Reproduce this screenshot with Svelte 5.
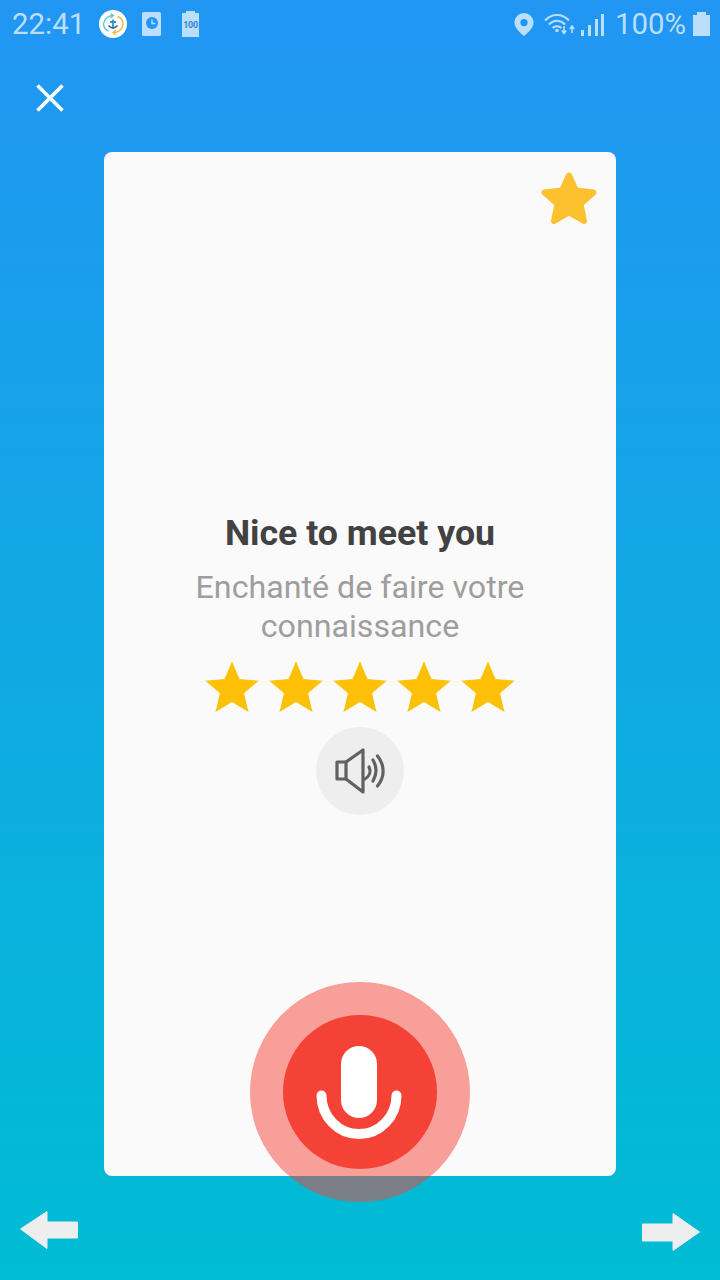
<script>
  const stars = [1, 2, 3, 4, 5];
</script>

<div class="screen">
  <header class="status">
    <span class="time">22:41</span>
    <svg class="app-badge" viewBox="0 0 28 28" aria-hidden="true">
      <circle cx="14" cy="14" r="14" fill="#fff" />
      <path d="M14 5.500A9.500 9.500 0 0 0 4.500 14a8 8 0 0 0 5 7" fill="none" stroke="#5ec2dc" stroke-width="1.400" />
      <path d="M11.500 3.500L14.500 5.500L11.500 8" fill="none" stroke="#5ec2dc" stroke-width="1.200" />
      <path d="M15 22.500A9 9 0 0 0 24 14a8 8 0 0 0-5.500-7.500" fill="none" stroke="#f6b73c" stroke-width="1.400" />
      <path d="M17 19.800L14 22.400L17 25" fill="none" stroke="#f6b73c" stroke-width="1.200" />
      <path d="M14 9.500v8M11 12h6" fill="none" stroke="#3f8fc4" stroke-width="1.800" />
      <path d="M9.500 15.500q4.500 5 9 0" fill="none" stroke="#2f6f9f" stroke-width="1.800" />
    </svg>
    <svg class="clock" viewBox="0 0 19 24" aria-hidden="true">
      <rect width="19" height="24" rx="1.500" fill="#bbdefb" />
      <circle cx="10" cy="11" r="6" fill="#2196f3" />
      <path d="M10 7.500V11.500H13.500" fill="none" stroke="#bbdefb" stroke-width="1.400" />
    </svg>
    <span class="batt-note"><span class="batt-cap"></span><span class="batt-label">100</span></span>
    <span class="spacer"></span>
    <svg class="pin" viewBox="0 0 20 23" aria-hidden="true">
      <path fill-rule="evenodd" fill="#bbdefb" d="M10 0a9.500 9.500 0 0 1 9.500 9.500C19.500 15 14 19.500 10 23 6 19.500.5 15 .5 9.500A9.500 9.500 0 0 1 10 0zm0 6a3.600 3.600 0 1 0 0 7.200A3.600 3.600 0 0 0 10 6z" />
    </svg>
    <svg class="wifi" viewBox="0 0 32 24" aria-hidden="true">
      <g fill="none" stroke="#bbdefb" stroke-width="2">
        <path d="M1 8.500C8 1 18 1 25 8.500" />
        <path d="M5 12.500C10 7.500 16 7.500 21 12.500" />
        <path d="M8.500 16C11 13.500 15 13.500 17.500 16" />
      </g>
      <circle cx="13" cy="18.500" r="1.800" fill="#bbdefb" />
      <path d="M20 14v6M17.800 18.500L20 21.500L22.200 18.500M28 21v-6M25.800 17L28 14L30.200 17" fill="none" stroke="#bbdefb" stroke-width="1.600" />
    </svg>
    <svg class="signal" viewBox="0 0 23 22" aria-hidden="true">
      <g fill="#bbdefb">
        <rect x="0" y="16" width="3" height="6" />
        <rect x="7" y="11" width="3" height="11" />
        <rect x="14" y="5" width="3" height="17" />
        <rect x="20" y="0" width="3" height="22" />
      </g>
    </svg>
    <span class="pct">100%</span>
    <span class="batt"><span class="batt-top"></span><span class="batt-body"></span></span>
  </header>

  <div class="toolbar">
    <svg class="close" viewBox="0 0 28 28" aria-label="Close">
      <path d="M1.500 1.500L26.500 26.500M26.500 1.500L1.500 26.500" fill="none" stroke="#fff" stroke-width="3.600" />
    </svg>
  </div>

  <main class="card">
    <svg class="favorite" viewBox="0 0 56 54" aria-hidden="true">
      <path d="M28 4.500L35 19.500L52.500 21.500L39.500 33L43 50L28 41.500L13 50L16.500 33L3.500 21.500L21 19.500Z" fill="#fdc02f" stroke="#fdc02f" stroke-width="6" stroke-linejoin="round" />
    </svg>

    <h1 class="title">Nice to meet you</h1>
    <p class="subtitle">Enchanté de faire votre connaissance</p>
    <div class="rating">
      {#each stars as s (s)}
        <svg class="star" viewBox="0 0 24 24" aria-hidden="true">
          <path fill="#ffc107" d="M12 17.270L18.180 21l-1.640-7.030L22 9.240l-7.190-.610L12 2 9.190 8.630 2 9.240l5.460 4.730L5.820 21z" />
        </svg>
      {/each}
    </div>
    <div class="speaker">
      <svg viewBox="316 727 88 88" aria-hidden="true">
        <g fill="none" stroke="#616161" stroke-width="3.200" stroke-linecap="round" stroke-linejoin="round">
          <path d="M346 762H337V779H346" />
          <path d="M346 762L363 750V792L346 779Z" />
          <path d="M369 767C371 771 370 776 365 779" />
          <path d="M373 760C377 767 377 774 373 781" />
          <path d="M377.500 756C385 765 385 777 377.500 786" />
        </g>
      </svg>
    </div>
  </main>

  <div class="mic-ring">
    <div class="mic-core">
      <svg viewBox="283 1015 154 154" aria-hidden="true">
        <rect x="341" y="1046" width="36" height="72" rx="18" fill="#fff" />
        <path d="M321.500 1095.500A37.500 38.500 0 0 0 396.500 1095.500" fill="none" stroke="#fff" stroke-width="10" stroke-linecap="round" />
      </svg>
    </div>
  </div>

  <footer class="nav">
    <svg class="arrow" viewBox="0 0 58 38" aria-label="Previous">
      <path d="M0.500 18L27 0.500V11H57.500V27H27V37.500Z" fill="#eeeeee" stroke="#eeeeee" stroke-linejoin="round" />
    </svg>
    <svg class="arrow right" viewBox="0 0 58 38" aria-label="Next">
      <path d="M57.500 19L31 0.500V11H0.500V28H31V37.500Z" fill="#eeeeee" stroke="#eeeeee" stroke-linejoin="round" />
    </svg>
  </footer>
</div>

<style>
  :global(body) {
    margin: 0;
  }

  .screen {
    position: relative;
    display: flex;
    flex-direction: column;
    width: 720px;
    height: 1280px;
    overflow: hidden;
    background: linear-gradient(180deg, #2196f3 0%, #00bcd4 100%);
    font-family: Roboto, "Liberation Sans", sans-serif;
  }

  .status {
    display: flex;
    align-items: center;
    height: 48px;
    padding: 0 10px 0 12px;
    box-sizing: border-box;
    color: #bbdefb;
    font-size: 29.4px;
  }

  .time {
    width: 70px;
    line-height: 48px;
    white-space: nowrap;
  }

  .app-badge {
    width: 28px;
    height: 28px;
    margin-left: 17px;
  }

  .clock {
    width: 19px;
    height: 24px;
    margin-left: 15px;
  }

  .batt-note {
    position: relative;
    display: block;
    width: 17px;
    height: 24px;
    margin: 2px 0 0 21px;
    background: #bbdefb;
  }

  .batt-cap {
    position: absolute;
    top: -2px;
    left: 4px;
    width: 9px;
    height: 2px;
    background: #bbdefb;
  }

  .batt-label {
    position: absolute;
    top: 7px;
    left: 0;
    width: 17px;
    color: #2f86d8;
    font-size: 9px;
    font-weight: 700;
    line-height: 10px;
    text-align: center;
    letter-spacing: -0.3px;
  }

  .spacer {
    flex: 1;
  }

  .pin {
    width: 20px;
    height: 23px;
  }

  .wifi {
    width: 32px;
    height: 24px;
    margin-left: 10px;
  }

  .signal {
    width: 23px;
    height: 22px;
    margin-left: 5px;
    margin-top: 1px;
  }

  .pct {
    margin-left: 11px;
    line-height: 48px;
  }

  .batt {
    display: flex;
    flex-direction: column;
    align-items: center;
    width: 17px;
    margin-left: 7px;
  }

  .batt-top {
    width: 9px;
    height: 3px;
    background: #bbdefb;
  }

  .batt-body {
    width: 17px;
    height: 21px;
    background: #bbdefb;
  }

  .toolbar {
    display: flex;
    height: 104px;
    padding: 36px 0 0 36px;
    box-sizing: border-box;
  }

  .close {
    width: 28px;
    height: 28px;
  }

  .card {
    position: relative;
    display: flex;
    flex-direction: column;
    align-items: center;
    justify-content: center;
    width: 512px;
    height: 1024px;
    margin: 0 auto;
    border-radius: 8px;
    background: #fafafa;
  }

  .favorite {
    position: absolute;
    top: 19px;
    right: 19px;
    width: 56px;
    height: 54px;
  }

  .title {
    margin: 0;
    color: #424242;
    font-size: 35.7px;
    font-weight: 700;
    line-height: 40px;
  }

  .subtitle {
    width: 400px;
    margin: 15px 0 0;
    color: #9e9e9e;
    font-size: 32.2px;
    line-height: 39px;
    text-align: center;
  }

  .rating {
    display: flex;
    margin-top: 10px;
  }

  .star {
    display: block;
    width: 64px;
    height: 64px;
  }

  .speaker {
    width: 88px;
    height: 88px;
    margin: 7px 0 1px;
    border-radius: 50%;
    background: #eeeeee;
  }

  .speaker svg {
    display: block;
    width: 88px;
    height: 88px;
  }

  .mic-ring {
    position: absolute;
    top: 982px;
    left: 250px;
    display: flex;
    align-items: center;
    justify-content: center;
    width: 220px;
    height: 220px;
    border-radius: 50%;
    background: rgba(244, 67, 54, 0.5);
  }

  .mic-core {
    width: 154px;
    height: 154px;
    border-radius: 50%;
    background: #f44336;
  }

  .mic-core svg {
    display: block;
    width: 154px;
    height: 154px;
  }

  .nav {
    display: flex;
    justify-content: space-between;
    align-items: flex-start;
    padding: 35px 20px 0;
  }

  .arrow {
    width: 58px;
    height: 38px;
  }

  .arrow.right {
    margin-top: 2px;
  }
</style>
